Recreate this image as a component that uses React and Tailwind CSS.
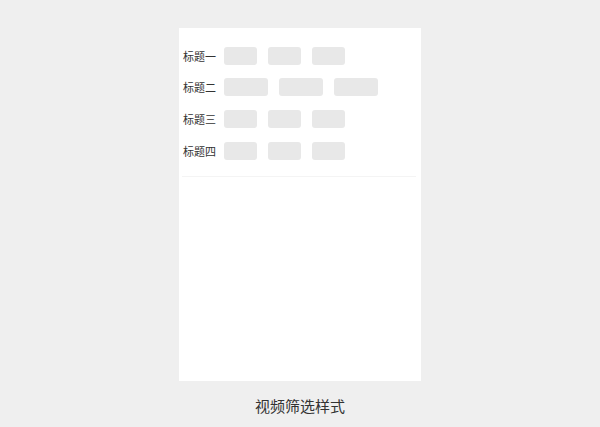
import React from "react";

const font = { fontFamily: '"Noto Sans CJK SC", "Noto Sans", sans-serif' };

// filter rows: label + option chips
const rows = [
  { label: "标题一", chip: "w-[33px]", gap: "gap-[11px]", mt: "mt-[19px]" },
  { label: "标题二", chip: "w-[44px]", gap: "gap-[11px]", mt: "mt-[13px]" },
  { label: "标题三", chip: "w-[33px]", gap: "gap-[11px]", mt: "mt-[14px]" },
  { label: "标题四", chip: "w-[33px]", gap: "gap-[11px]", mt: "mt-[14px]" },
];

function FilterRow({ label, chip, gap, mt }) {
  return (
    <div className={`flex items-center h-[18px] ${mt}`}>
      <span className="w-[45px] pl-[4px] text-[11px] leading-none text-[#333]">
        {label}
      </span>
      <div className={`flex ${gap}`}>
        {[0, 1, 2].map((i) => (
          <div key={i} className={`${chip} h-[18px] rounded-[3px] bg-[#e8e8e8]`} />
        ))}
      </div>
    </div>
  );
}

export default function App() {
  return (
    <div
      className="w-[600px] h-[427px] bg-[#efefef] flex flex-col items-center pt-[28px]"
      style={font}
    >
      <div className="w-[242px] h-[353px] bg-white flex flex-col">
        {rows.map((r) => (
          <FilterRow key={r.label} {...r} />
        ))}
        <div className="mt-[16px] ml-[3px] w-[234px] h-px bg-[#f4f4f4]" />
      </div>
      <div className="mt-[15px] text-[15px] leading-[20px] text-[#333]">
        视频筛选样式
      </div>
    </div>
  );
}
